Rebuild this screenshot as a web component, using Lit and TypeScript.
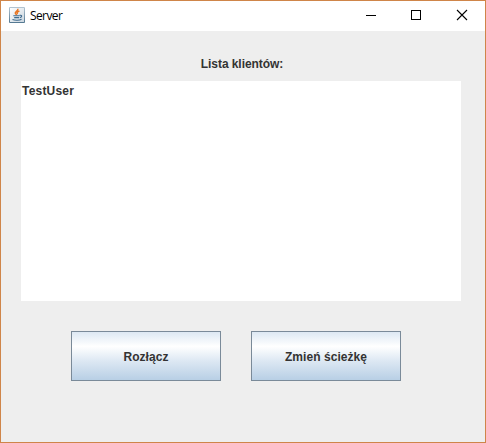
import { LitElement, html, css } from "lit";
import { customElement, property } from "lit/decorators.js";

@customElement("metal-button")
class MetalButton extends LitElement {
  @property() label = "";
  static styles = css`
    :host { display: block; width: 150px; height: 50px; }
    .button {
      display: block; box-sizing: border-box; width: 100%; height: 100%;
      margin: 0; padding: 2px 0 0; border: 1px solid #7a8a99; border-radius: 0;
      background: linear-gradient(#dde8f3 0%, #ffffff 30%, #dde8f3 60%, #b8cfe5 100%);
      color: #333; font: bold 12px/14px "Liberation Sans", Arial, sans-serif;
      letter-spacing: 0.06px;
    }
  `;
  render() {
    return html`<button class="button">${this.label}</button>`;
  }
}

@customElement("app-root")
class AppRoot extends LitElement {
  @property({ attribute: false }) clients = ["TestUser"];
  static styles = css`
    :host { display: block; }
    .window {
      box-sizing: border-box; width: 486px; height: 443px;
      display: flex; flex-direction: column;
      border: 1px solid #cf8549; background: #eee; color: #333;
      font: bold 12px/14px "Liberation Sans", Arial, sans-serif;
    }
    .titlebar { height: 30px; flex: none; display: flex; background: #fff; }
    .logo { width: 16px; height: 16px; margin: 6px 5px 0 8px; }
    .title { flex: 1; font: 12px/30px "Open Sans", "Noto Sans", sans-serif; letter-spacing: -0.6px; color: #000; }
    .control { width: 45px; height: 30px; display: block; }
    .content { flex: 1; display: flex; flex-direction: column; padding: 26px 24px 0 20px; }
    .caption { text-align: center; width: 442px; height: 24px; letter-spacing: -0.07px; }
    .list { margin: 0; padding: 3px 1px; box-sizing: border-box; width: 440px; height: 220px; background: #fff; list-style: none; letter-spacing: 0.2px; }
    .actions { display: flex; gap: 30px; padding: 30px 0 0 50px; }
  `;
  render() {
    return html`
      <div class="window">
        <header class="titlebar">
          <svg class="logo" viewBox="0 0 16 16">
            <defs>
              <linearGradient id="plate" x1="0" y1="0" x2="0" y2="1">
                <stop offset="0" stop-color="#b4c6d3" />
                <stop offset="1" stop-color="#527790" />
              </linearGradient>
              <linearGradient id="face" x1="0" y1="0" x2="1" y2="1">
                <stop offset="0" stop-color="#ffffff" />
                <stop offset="1" stop-color="#cbd6df" />
              </linearGradient>
            </defs>
            <rect width="16" height="16" rx="1" fill="url(#plate)" />
            <rect x="1" y="1" width="14" height="14" fill="url(#face)" />
            <path d="M9 1.8C9.2 4.2 5.6 4.6 6.3 6.5L7.7 8M10.4 4C8 4.9 7.7 5.8 8.6 7.1" fill="none" stroke="#e87522" stroke-width="1.4" />
            <path d="M4.3 8.7H10.5M5.2 10.6H10M3.5 12.5C6 13.5 10.5 13.4 12.5 12.2M10.7 8.4C13.7 7.7 12.9 10.3 10.8 10.6" fill="none" stroke="#3f6b8e" stroke-width="1.1" />
          </svg>
          <span class="title">Server</span>
          <svg class="control" viewBox="0 0 45 30" shape-rendering="crispEdges">
            <path d="M16 14.5H26" stroke="#000" />
          </svg>
          <svg class="control" viewBox="0 0 45 30" shape-rendering="crispEdges">
            <rect x="16.5" y="9.5" width="9" height="9" fill="none" stroke="#000" />
          </svg>
          <svg class="control" viewBox="0 0 45 30">
            <path d="M17 9L27 19M27 9L17 19" stroke="#000" stroke-width="1.1" />
          </svg>
        </header>
        <main class="content">
          <div class="caption">Lista klientów:</div>
          <ul class="list">${this.clients.map((name) => html`<li>${name}</li>`)}</ul>
          <div class="actions">
            <metal-button label="Rozłącz"></metal-button>
            <metal-button label="Zmień ścieżkę"></metal-button>
          </div>
        </main>
      </div>
    `;
  }
}
